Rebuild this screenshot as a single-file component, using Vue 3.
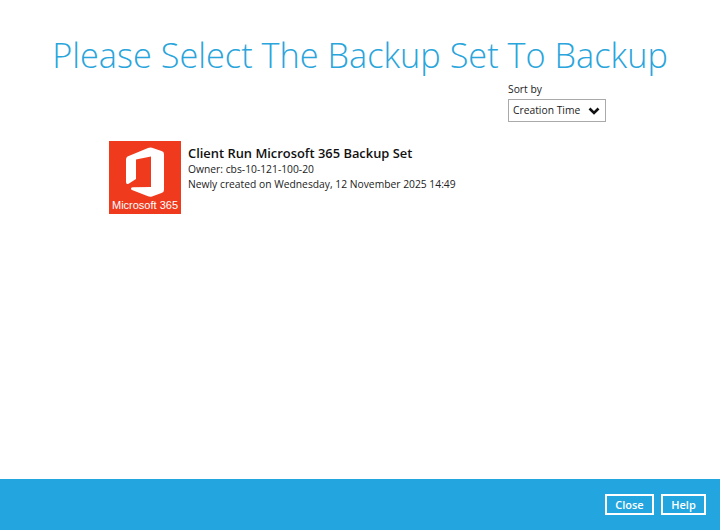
<template>
  <div class="page">
    <main class="content">
      <h1>Please Select The Backup Set To Backup</h1>
      <div class="sort">
        <label>Sort by</label>
        <div class="select">
          <span>Creation Time</span>
          <svg width="12" height="8" viewBox="0 0 12 8">
            <path d="M1.5 1.5 6 6l4.500-4.500" fill="none" stroke="#111" stroke-width="2.600" />
          </svg>
        </div>
      </div>
      <div class="set">
        <div class="logo">
          <svg width="38" height="50" viewBox="0 0 38 50">
            <path
              fill="#fff"
              fill-rule="evenodd"
              d="M1.500 9.500 22 1q2-.9 4-.3L35.500 4Q38 4.700 38 7v36q0 2.300-2.500 3L26 49.500q-2 .6-4-.2L6 43q-1.500-.7-.8-2 .5-.8 1.800-.7L25 40V9.500L10 12.500V32L3 36.500Q0 38 0 35V12.500q0-2 1.500-3Z"
            />
          </svg>
          <span>Microsoft 365</span>
        </div>
        <div class="info">
          <div class="name">{{ backupSet.name }}</div>
          <div>Owner: {{ backupSet.owner }}</div>
          <div>Newly created on {{ backupSet.created }}</div>
        </div>
      </div>
    </main>
    <footer class="footer">
      <button v-for="b in buttons" :key="b" class="btn">{{ b }}</button>
    </footer>
  </div>
</template>

<script setup>
const backupSet = {
  name: 'Client Run Microsoft 365 Backup Set',
  owner: 'cbs-10-121-100-20',
  created: 'Wednesday, 12 November 2025 14:49'
}

const buttons = ['Close', 'Help']
</script>

<style>
body {
  margin: 0;
  background: #fff;
}
</style>

<style scoped>
.page {
  width: 720px;
  height: 530px;
  display: flex;
  flex-direction: column;
  font-family: "Open Sans", sans-serif;
  color: #222;
}

.content {
  flex: 1;
  display: flex;
  flex-direction: column;
}

h1 {
  margin: 32px 0 0;
  font-size: 34.300px;
  line-height: 46px;
  font-weight: 300;
  text-align: center;
  color: #29a5dc;
  white-space: nowrap;
}

.sort {
  align-self: flex-start;
  margin: 4px 0 0 508px;
  font-size: 10.300px;
  line-height: 15px;
}

.select {
  width: 98px;
  height: 23px;
  box-sizing: border-box;
  margin-top: 2px;
  padding: 0 5px 0 4px;
  display: flex;
  align-items: center;
  justify-content: space-between;
  border: 1px solid #aaa;
}

.set {
  display: flex;
  gap: 7px;
  margin: 19px 0 0 109px;
  font-size: 10.300px;
  line-height: 15px;
}

.logo {
  width: 72px;
  height: 73px;
  padding-top: 6px;
  box-sizing: border-box;
  display: flex;
  flex-direction: column;
  align-items: center;
  background: #f03a1e;
  color: #fff;
}

.logo span {
  margin-top: 2px;
  font-family: "Liberation Sans", sans-serif;
  font-size: 11px;
  line-height: 13px;
  white-space: nowrap;
}

.info {
  padding-top: 3px;
}

.name {
  font-size: 12.900px;
  line-height: 18px;
  font-weight: 600;
  color: #111;
}

.footer {
  height: 51px;
  box-sizing: border-box;
  padding: 15px 14px 0 0;
  display: flex;
  justify-content: flex-end;
  align-items: flex-start;
  gap: 7px;
  background: #23a6e0;
}

.btn {
  height: 21px;
  padding: 0;
  width: 49px;
  background: transparent;
  border: 2px solid #fff;
  color: #fff;
  font-family: "Open Sans", sans-serif;
  font-size: 11px;
  font-weight: 600;
}

.btn:last-child {
  width: 45px;
}
</style>
